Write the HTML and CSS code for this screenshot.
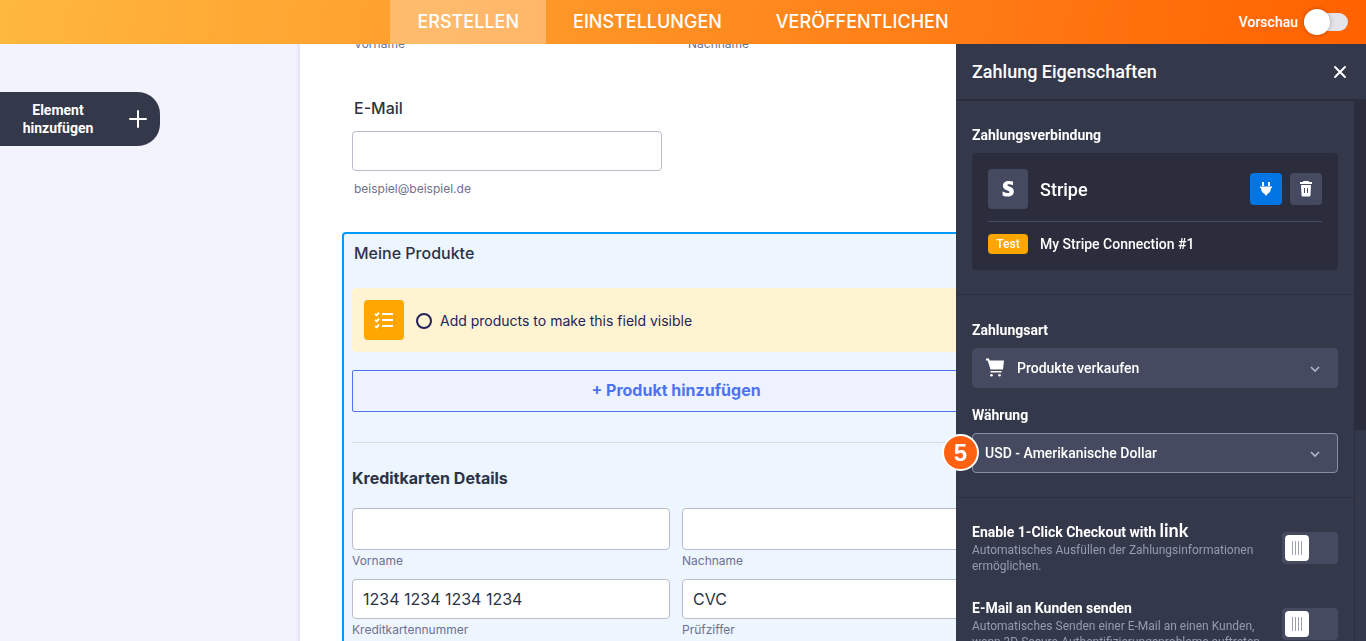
FILE: index.html
```html
<!DOCTYPE html>
<html lang="de">
<head>
    <meta charset="UTF-8">
    <meta name="viewport" content="width=device-width, initial-scale=1.0">
    <title>Formular erstellen</title>
    <link rel="stylesheet" href="styles.css">
</head>
<body>

    <!-- Top bar -->
    <header class="topbar">
        <nav class="tabs">
            <a class="tab active" href="#erstellen">ERSTELLEN</a>
            <a class="tab" href="#einstellungen">EINSTELLUNGEN</a>
            <a class="tab" href="#veroeffentlichen">VERÖFFENTLICHEN</a>
        </nav>
        <label class="preview">
            Vorschau
            <input type="checkbox" class="preview-switch">
        </label>
    </header>

    <main class="builder">
        <button class="add-element" type="button">
            <span class="add-text">Element hinzufügen</span>
            <svg width="20" height="20" viewBox="0 0 20 20" fill="none" stroke="#fff" stroke-width="2" stroke-linecap="round">
                <path d="M10 2v16M2 10h16"/>
            </svg>
        </button>

        <!-- Form page -->
        <form class="form-page">
            <div class="name-row">
                <span class="sublabel">Vorname</span>
                <span class="sublabel">Nachname</span>
            </div>

            <div class="email-field">
                <label class="question" for="email">E-Mail</label>
                <input class="box email-box" type="email" id="email">
                <span class="sublabel">beispiel@beispiel.de</span>
            </div>

            <section class="products">
                <h2 class="question">Meine Produkte</h2>
                <div class="notice">
                    <span class="notice-icon">
                        <svg width="20" height="20" viewBox="0 0 20 20" fill="none" stroke="#fff">
                            <path stroke-width="2" d="M8 4h11M8 10h11M8 16h11"/>
                            <path stroke-width="2" d="M1 4l1.600 1.200L5 2.800M1 10l1.600 1.200L5 8.800M1 16l1.600 1.200L5 14.800"/>
                        </svg>
                    </span>
                    <label class="notice-label">
                        <input type="radio" class="notice-radio" name="product">
                        Add products to make this field visible
                    </label>
                </div>
                <button class="add-product" type="button">+ Produkt hinzufügen</button>
                <hr class="divider">
                <h3 class="card-title">Kreditkarten Details</h3>
                <div class="card-grid">
                    <div class="card-field">
                        <input class="box tall" type="text" id="first">
                        <label class="sublabel" for="first">Vorname</label>
                    </div>
                    <div class="card-field">
                        <input class="box tall" type="text" id="last">
                        <label class="sublabel" for="last">Nachname</label>
                    </div>
                    <div class="card-field">
                        <input class="box" type="text" id="number" placeholder="1234 1234 1234 1234">
                        <label class="sublabel" for="number">Kreditkartennummer</label>
                    </div>
                    <div class="card-field">
                        <input class="box" type="text" id="cvc" placeholder="CVC">
                        <label class="sublabel" for="cvc">Prüfziffer</label>
                    </div>
                </div>
            </section>
        </form>
    </main>

    <!-- Properties panel -->
    <aside class="panel">
        <div class="panel-head">
            <h2 class="panel-title">Zahlung Eigenschaften</h2>
            <button class="close" type="button" aria-label="Schließen">
                <svg width="14" height="14" viewBox="0 0 14 14" fill="none" stroke="#fff" stroke-width="2" stroke-linecap="round">
                    <path d="M2 2l10 10M12 2L2 12"/>
                </svg>
            </button>
        </div>
        <div class="panel-body">
            <div class="panel-content">
                <section class="group">
                    <h3 class="panel-label">Zahlungsverbindung</h3>
                    <div class="connection">
                        <div class="gateway">
                            <span class="gateway-logo">
                                <svg width="14" height="18" viewBox="0 0 14 18" fill="#fff">
                                    <path d="M12 1.6v3.7C10.700 4.600 9.200 4.200 8 4.200c-1 0-1.700.3-1.700.9C6.300 6.900 12.800 6.300 12.800 11.600c0 3.300-2.500 5-6 5-1.700 0-3.600-.4-5.200-1.200v-3.800c1.600.9 3.600 1.500 5.200 1.500 1.100 0 1.800-.3 1.800-1C8.600 9.900 1.900 10.700 1.900 5.700 1.900 2.600 4.300.9 7.700.9c1.500 0 3 .2 4.300.7z"/>
                                </svg>
                            </span>
                            <span class="gateway-name">Stripe</span>
                            <button class="icon-button blue" type="button" aria-label="Verbinden">
                                <svg width="14" height="16" viewBox="0 0 14 16" fill="#fff">
                                    <path d="M3 1h2v4H3zM9 1h2v4H9zM1 5.500h12V7h-1c0 2.800-1.500 5-3.600 6L7 15l-1.400-2C3.500 12 2 9.800 2 7H1z"/>
                                </svg>
                            </button>
                            <button class="icon-button" type="button" aria-label="Löschen">
                                <svg width="14" height="16" viewBox="0 0 14 16" fill="#fff">
                                    <path d="M4.500 0h5l.8 1H13v2H1V1h2.700z"/>
                                    <path fill-rule="evenodd" d="M2 4h10l-.5 10a1.500 1.500 0 0 1-1.500 1.500H4A1.500 1.500 0 0 1 2.500 14zm3 3v5h1V7zm3 0v5h1V7z"/>
                                </svg>
                            </button>
                        </div>
                        <div class="account">
                            <span class="badge">Test</span>
                            <span>My Stripe Connection #1</span>
                        </div>
                    </div>
                </section>

                <section class="group">
                    <label class="panel-label" for="type">Zahlungsart</label>
                    <div class="select-wrap">
                        <svg class="cart" width="20" height="20" viewBox="0 0 20 20" fill="#fff">
                            <path d="M1 0.500h3l.6 2H19l-1 9H5.500L2.700 2.500H1z"/>
                            <path d="M5.500 13h11v1.500h-11z"/>
                            <circle cx="6.500" cy="17.300" r="1.300"/>
                            <circle cx="14.500" cy="17.300" r="1.300"/>
                        </svg>
                        <select class="select with-icon" id="type">
                            <option>Produkte verkaufen</option>
                        </select>
                        <svg class="chevron" width="10" height="8" viewBox="0 0 10 8" fill="none" stroke="#b3b6c6" stroke-width="1.600">
                            <path d="M1 2l4 4 4-4"/>
                        </svg>
                    </div>
                    <label class="panel-label next" for="currency">Währung</label>
                    <div class="select-wrap">
                        <select class="select outlined" id="currency">
                            <option>USD - Amerikanische Dollar</option>
                        </select>
                        <svg class="chevron" width="10" height="8" viewBox="0 0 10 8" fill="none" stroke="#b3b6c6" stroke-width="1.600">
                            <path d="M1 2l4 4 4-4"/>
                        </svg>
                        <span class="step">5</span>
                    </div>
                </section>

                <section class="group options">
                    <div class="option">
                        <div class="option-text">
                            <label class="panel-label tight" for="link">Enable 1-Click Checkout with <span class="link-logo">link</span></label>
                            <p class="hint">Automatisches Ausfüllen der Zahlungsinformationen ermöglichen.</p>
                        </div>
                        <input type="checkbox" class="toggle" id="link">
                    </div>
                    <div class="option">
                        <div class="option-text">
                            <label class="panel-label tight" for="mail">E-Mail an Kunden senden</label>
                            <p class="hint">Automatisches Senden einer E-Mail an einen Kunden, wenn 3D Secure-Authentifizierungsprobleme auftreten.</p>
                        </div>
                        <input type="checkbox" class="toggle" id="mail">
                    </div>
                </section>
            </div>
            <div class="scrollbar"><div class="thumb"></div></div>
        </div>
    </aside>

</body>
</html>
```
FILE: styles.css
```css
* {
    box-sizing: border-box;
}

body {
    margin: 0;
    height: 100vh;
    overflow: hidden;
    background-color: #f3f3fe;
    font-family: Inter, "Liberation Sans", sans-serif;
    color: #2c3345;
}

h2, h3, p {
    margin: 0;
}

button, input, select {
    font-family: inherit;
    margin: 0;
}

button {
    border: none;
    padding: 0;
    cursor: pointer;
}

/* Top bar */
.topbar {
    position: relative;
    z-index: 2;
    display: grid;
    grid-template-columns: 1fr auto 1fr;
    height: 44px;
    background: linear-gradient(100deg, #ffb83f 0%, #ff9527 42%, #ff6100 100%);
    color: #fff;
}

.tabs {
    grid-column: 2;
    display: flex;
}

.tab {
    padding: 0 27px;
    line-height: 44px;
    font-size: 18px;
    font-weight: 500;
    color: #fff;
    text-decoration: none;
}

.tab.active {
    background-color: rgba(255, 255, 255, 0.3);
}

.preview {
    display: flex;
    align-items: center;
    justify-content: flex-end;
    gap: 6px;
    padding-right: 18px;
    font-family: Roboto, sans-serif;
    font-size: 14px;
    font-weight: 500;
}

.preview-switch {
    appearance: none;
    display: flex;
    align-items: center;
    width: 44px;
    height: 18px;
    border-radius: 9px;
    background-color: #e3e3e9;
}

.preview-switch::before {
    content: "";
    width: 26px;
    height: 26px;
    border-radius: 50%;
    background-color: #fff;
    box-shadow: 0 0 4px rgba(0, 0, 0, 0.3);
}

/* Add element button */
.add-element {
    position: absolute;
    left: 0;
    top: 92px;
    display: flex;
    align-items: center;
    justify-content: space-between;
    width: 160px;
    height: 54px;
    padding: 0 12px 0 16px;
    border-radius: 0 22px 22px 0;
    background-color: #34384b;
    color: #fff;
}

.add-text {
    width: 84px;
    font-family: Roboto, sans-serif;
    font-size: 14px;
    font-weight: 700;
    line-height: 18px;
}

/* Form page */
.form-page {
    max-width: 766px;
    min-height: 100vh;
    margin: 0 auto;
    padding: 0 56px 0 42px;
    background-color: #fff;
    box-shadow: 0 0 4px rgba(84, 95, 111, 0.25);
}

.sublabel {
    font-size: 12px;
    line-height: 16px;
    color: #6b7190;
}

.question {
    font-size: 16px;
    font-weight: 500;
    line-height: 20px;
}

.name-row {
    display: grid;
    grid-template-columns: 1fr 1fr;
    gap: 12px;
    margin-top: -8px;
    padding-left: 12px;
}

.email-field {
    display: flex;
    flex-direction: column;
    padding: 46px 12px 35px;
}

.email-box {
    max-width: 310px;
    margin: 13px 0 10px -2px;
}

.box {
    width: 100%;
    height: 40px;
    padding: 0 10px;
    border: 1px solid #b8bdc9;
    border-radius: 4px;
    background-color: #fff;
    font-size: 16px;
    color: #2c3345;
}

.box::placeholder {
    color: #2c3345;
}

.box.tall {
    height: 42px;
}

/* Products field */
.products {
    padding: 9px 8px 40px;
    border: 2px solid #0099ff;
    border-radius: 4px;
    background-color: #edf5ff;
}

.products .question {
    padding-left: 2px;
}

.notice {
    display: flex;
    align-items: center;
    gap: 12px;
    height: 64px;
    margin-top: 25px;
    padding: 12px;
    border-radius: 4px;
    background-color: #fff3d1;
}

.notice-icon {
    display: flex;
    align-items: center;
    justify-content: center;
    width: 40px;
    height: 40px;
    border-radius: 4px;
    background-color: #ffa600;
}

.notice-label {
    display: flex;
    align-items: center;
    gap: 8px;
    padding-top: 1px;
    font-size: 14px;
    color: #23245b;
}

.notice-radio {
    appearance: none;
    width: 16px;
    height: 16px;
    border: 2px solid #23245b;
    border-radius: 50%;
}

.add-product {
    width: 100%;
    height: 42px;
    margin-top: 18px;
    padding-bottom: 2px;
    border: 1px solid #4f73f0;
    border-radius: 2px;
    background-color: #eef3ff;
    font-size: 16px;
    font-weight: 700;
    color: #4f73f0;
}

.divider {
    margin: 30px 0 25px;
    border: none;
    border-top: 1px solid #d4dceb;
}

.card-title {
    font-size: 16px;
    font-weight: 700;
    line-height: 20px;
}

.card-grid {
    display: grid;
    grid-template-columns: 1fr 1fr;
    gap: 10px 12px;
    margin-top: 20px;
}

.card-field {
    display: flex;
    flex-direction: column;
    gap: 3px;
}

/* Properties panel */
.panel {
    position: fixed;
    top: 44px;
    right: 0;
    bottom: 0;
    display: flex;
    flex-direction: column;
    width: 410px;
    background-color: #34384b;
    font-family: Roboto, sans-serif;
    color: #fff;
}

.panel-head {
    display: flex;
    flex: none;
    align-items: center;
    justify-content: space-between;
    height: 57px;
    padding: 0 19px 0 16px;
    border-bottom: 2px solid #2b2d3c;
}

.panel-title {
    font-size: 18px;
    font-weight: 500;
}

.close {
    display: flex;
    background: none;
}

.panel-body {
    display: flex;
    flex: 1;
    min-height: 0;
}

.panel-content {
    flex: 1;
    min-width: 0;
}

.group {
    padding: 26px 16px 24px;
    border-bottom: 1px solid #2b2d3c;
}

.group:first-child,
.group.options {
    padding-top: 25px;
}

.panel-label {
    display: block;
    margin-bottom: 9px;
    font-size: 14px;
    font-weight: 700;
    line-height: 18px;
}

.panel-label.next {
    margin-top: 18px;
}

.panel-label.tight {
    margin-bottom: 1px;
}

.connection {
    padding: 16px;
    border-radius: 4px;
    background-color: #2b2d3c;
}

.gateway {
    display: flex;
    align-items: center;
    gap: 8px;
    padding-bottom: 12px;
    border-bottom: 1px solid #454a60;
}

.gateway-logo {
    display: flex;
    align-items: center;
    justify-content: center;
    width: 40px;
    height: 40px;
    border-radius: 4px;
    background-color: #454a60;
}

.gateway-name {
    flex: 1;
    padding-left: 4px;
    font-size: 18px;
    font-weight: 500;
}

.icon-button {
    display: flex;
    align-items: center;
    justify-content: center;
    width: 32px;
    height: 32px;
    border-radius: 4px;
    background-color: #454a60;
}

.icon-button.blue {
    background-color: #0075e3;
}

.account {
    display: flex;
    align-items: center;
    gap: 12px;
    padding-top: 12px;
    font-size: 14px;
    font-weight: 500;
}

.badge {
    width: 40px;
    border-radius: 4px;
    background-color: #ffa600;
    font-size: 12px;
    line-height: 20px;
    text-align: center;
}

.select-wrap {
    position: relative;
}

.select {
    display: block;
    appearance: none;
    width: 100%;
    height: 40px;
    padding: 0 36px 0 12px;
    border: 1px solid #454a60;
    border-radius: 4px;
    background-color: #454a60;
    font-size: 14px;
    font-weight: 500;
    color: #fff;
}

.select.with-icon {
    padding-left: 44px;
}

.select.outlined {
    border-color: #8a8ea5;
}

.cart {
    position: absolute;
    left: 13px;
    top: 10px;
}

.chevron {
    position: absolute;
    right: 18px;
    top: 17px;
}

/* Step marker on top of the currency field */
.step {
    position: absolute;
    left: -30px;
    top: 1px;
    width: 37px;
    height: 37px;
    border: 2px solid #fff;
    border-radius: 50%;
    background-color: #ff6110;
    font-family: "Liberation Sans", sans-serif;
    font-size: 24px;
    font-weight: 700;
    line-height: 33px;
    text-align: center;
}

.option {
    display: flex;
    align-items: flex-start;
    justify-content: space-between;
    gap: 16px;
}

.option + .option {
    margin-top: 25px;
}

.option-text {
    max-width: 300px;
}

.hint {
    font-size: 12px;
    line-height: 16px;
    color: #979bb0;
}

.link-logo {
    font-family: Lato, sans-serif;
    font-size: 18px;
    font-weight: 700;
    line-height: 1px;
}

.toggle {
    appearance: none;
    flex: none;
    width: 56px;
    height: 32px;
    margin-top: 9px;
    padding: 3px;
    border-radius: 4px;
    background-color: #454a60;
}

.toggle::before {
    content: "";
    display: block;
    width: 24px;
    height: 26px;
    border-radius: 4px;
    background: repeating-linear-gradient(90deg, #9a9eb2 0 1px, #fff 1px 3px) center / 10px 14px no-repeat #fff;
}

.scrollbar {
    display: flex;
    align-items: flex-end;
    width: 12px;
    background-color: #2b2d3c;
}

.thumb {
    width: 100%;
    height: 39%;
    border-left: 1px solid #2b2d3c;
    background-color: #34384b;
}
```
